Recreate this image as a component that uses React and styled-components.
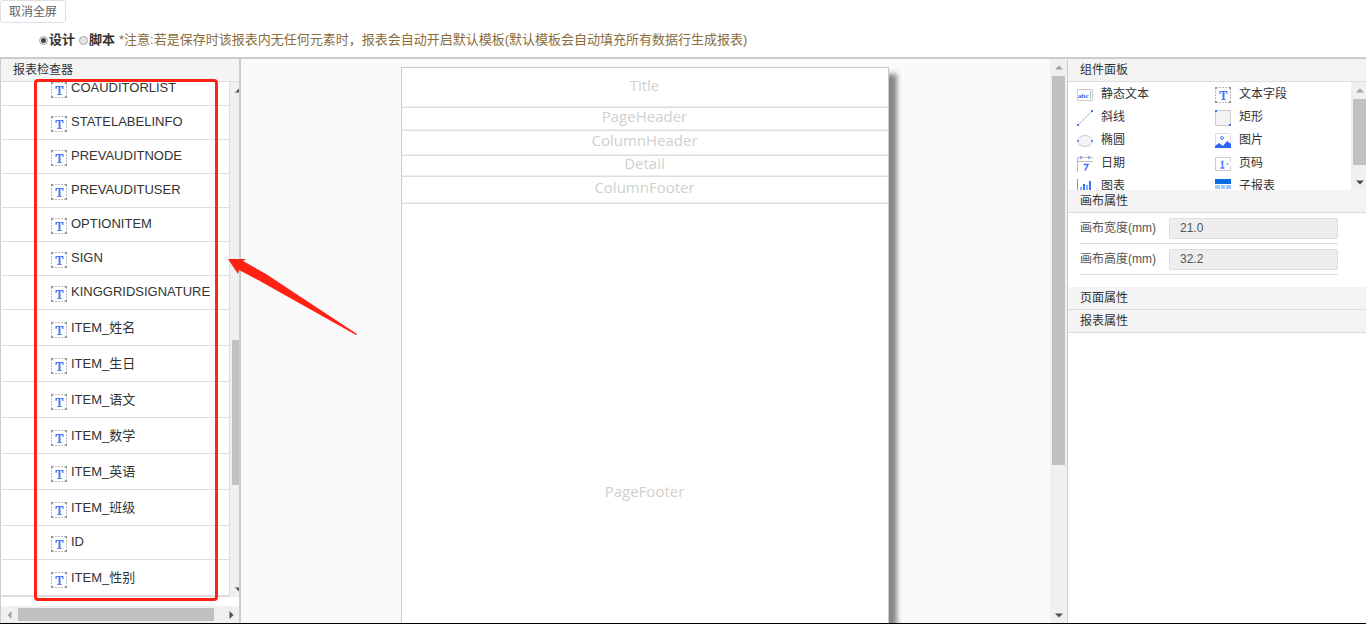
import React, { useState } from 'react';
import styled, { createGlobalStyle, css } from 'styled-components';

const GlobalStyle = createGlobalStyle`
  * {
    box-sizing: border-box;
  }

  body {
    margin: 0;
    background: #fff;
    color: #333;
    font-family: 'Liberation Sans', 'Noto Sans CJK SC', sans-serif;
    font-size: 12px;
  }

  button, input {
    font-family: inherit;
  }
`;

const Page = styled.div`
  display: flex;
  flex-direction: column;
  height: 100vh;
  overflow: hidden;
  border-bottom: 1px solid #000;
`;

const FullscreenButton = styled.button`
  align-self: flex-start;
  height: 23px;
  padding: 0 8px;
  border: 1px solid #dcdfe6;
  border-radius: 3px;
  background: #fff;
  color: #606266;
  font-size: 12px;
  line-height: 20px;
  white-space: nowrap;
  cursor: pointer;
`;

const ModeBar = styled.form`
  display: flex;
  align-items: center;
  height: 34px;
  padding-left: 39px;
  font-size: 13px;
  line-height: 20px;
  white-space: nowrap;
`;

const ModeLabel = styled.label`
  display: flex;
  align-items: center;
  margin-right: 4px;
  font-weight: bold;
`;

const Radio = styled.input`
  appearance: none;
  width: 9px;
  height: 9px;
  margin: 0 1px 0 0;
  border: 1px solid #a6a6a6;
  border-radius: 50%;
  background: #e6e6e6;

  &:checked {
    background: radial-gradient(circle, #444 0 2px, #e6e6e6 3px);
  }
`;

const Notice = styled.span`
  color: #8a6d3b;
`;

const Workspace = styled.main`
  display: flex;
  flex: 1;
  min-height: 0;
  border-top: 2px solid #ccc;
`;

const PanelTitle = styled.h2`
  flex: none;
  height: 23px;
  margin: 0;
  padding-left: 12px;
  border-bottom: 1px solid #ddd;
  background: #f4f4f4;
  font-size: 12px;
  font-weight: normal;
  line-height: 22px;
`;

const Inspector = styled.aside`
  position: relative;
  display: flex;
  flex: none;
  flex-direction: column;
  width: 241px;
  border: solid #ccc;
  border-width: 0 2px 0 1px;
`;

const FieldArea = styled.div`
  display: flex;
  flex: 1;
  min-height: 0;
  margin-bottom: 9px;
`;

const FieldList = styled.ul`
  display: flex;
  flex: 1;
  flex-direction: column;
  justify-content: flex-end;
  margin: 0;
  padding: 0 0 0 1px;
  overflow: hidden;
  border-right: 1px solid #ddd;
  border-bottom: 1px solid #ddd;
  list-style: none;
`;

const FieldRow = styled.li`
  display: flex;
  flex: none;
  align-items: center;
  gap: 4px;
  height: ${({ $tall }) => ($tall ? 36 : 34)}px;
  padding: 0 0 ${({ $tall }) => ($tall ? 0 : 1)}px 49px;
  border-bottom: 1px solid #ddd;
  font-size: 13px;
  line-height: 20px;
  white-space: nowrap;

  svg {
    flex: none;
    margin-top: 4px;
  }
`;

const Track = styled.div`
  display: flex;
  flex: none;
  background: #f0f0f0;
  overflow: hidden;
  ${({ $horizontal, $size }) =>
    $horizontal
      ? css`
          height: ${$size}px;
        `
      : css`
          flex-direction: column;
          width: ${$size}px;
        `}
`;

const TrackButton = styled.button`
  display: flex;
  flex: none;
  align-items: center;
  justify-content: center;
  width: 17px;
  height: 17px;
  padding: 0;
  border: 0;
  background: none;
  color: ${({ $dim }) => ($dim ? '#a3a3a3' : '#505050')};
`;

const Rail = styled.div`
  display: flex;
  flex: 1;
  ${({ $horizontal }) =>
    $horizontal
      ? css`
          padding: 2px 0;
        `
      : css`
          flex-direction: column;
          width: 17px;
          padding: 0 2px;
        `}
`;

const Gap = styled.div`
  flex: ${({ $grow }) => $grow} 1 0;
`;

const Thumb = styled(Gap)`
  background: #c1c1c1;
`;

const Stage = styled.section`
  display: flex;
  flex: 1;
  justify-content: center;
  min-width: 0;
  padding: 8px 2px 0 0;
  background: #fafafa;
  overflow: hidden;
`;

const Paper = styled.div`
  flex: none;
  width: 488px;
  height: 720px;
  border: 1px solid #ccc;
  background: #fff;
  box-shadow: 8px 7px 5px #888;
`;

const Band = styled.div`
  display: flex;
  align-items: center;
  justify-content: center;
  height: ${({ $height }) => $height}px;
  padding-bottom: 6px;
  border-bottom: 1px solid #ddd;
  box-shadow: inset 0 -1px #eee;
  color: #d0d0d0;
  font-family: 'Open Sans', sans-serif;
  font-size: 15px;
  font-weight: 500;
  line-height: 20px;
`;

const Properties = styled.aside`
  display: flex;
  flex: none;
  flex-direction: column;
  width: 299px;
  border-left: 1px solid #ccc;
`;

const PaletteArea = styled.div`
  display: flex;
  height: 108px;
  overflow: hidden;
`;

const Palette = styled.div`
  display: grid;
  flex: 1;
  grid-template-columns: 138px 1fr;
  grid-auto-rows: 23px;
  align-content: start;
  padding-left: 9px;
`;

const Tool = styled.button`
  display: flex;
  align-items: center;
  gap: 8px;
  padding: 1px 0 0;
  border: 0;
  background: none;
  color: #333;
  font-size: 12px;
  line-height: 20px;

  svg {
    flex: none;
    margin-top: 2px;
  }
`;

const Fields = styled.div`
  display: flex;
  flex-direction: column;
  padding: 0 28px 12px 12px;
`;

const Field = styled.label`
  display: flex;
  align-items: center;
  height: 31px;
  border-bottom: 1px solid #ddd;
  color: #555;
  line-height: 20px;
`;

const FieldName = styled.span`
  width: 89px;
  white-space: nowrap;
`;

const FieldInput = styled.input`
  flex: 1;
  min-width: 0;
  height: 21px;
  padding: 0 10px;
  border: 1px solid #ddd;
  border-radius: 2px;
  background: #eee;
  color: #555;
  font-size: 12px;
`;

const Highlight = styled.div`
  position: absolute;
  z-index: 1;
  top: 20px;
  bottom: 22px;
  left: 33px;
  width: 184px;
  border: 3px solid #ff2214;
  border-radius: 4px;
  pointer-events: none;
`;

const Pointer = styled.svg`
  position: absolute;
  z-index: 1;
  top: 199px;
  left: 226px;
  pointer-events: none;
`;

const fields = [
  'COAUDITORLIST',
  'STATELABELINFO',
  'PREVAUDITNODE',
  'PREVAUDITUSER',
  'OPTIONITEM',
  'SIGN',
  'KINGGRIDSIGNATURE',
  'ITEM_姓名',
  'ITEM_生日',
  'ITEM_语文',
  'ITEM_数学',
  'ITEM_英语',
  'ITEM_班级',
  'ID',
  'ITEM_性别',
];

const bands = [
  { name: 'Title', height: 40 },
  { name: 'PageHeader', height: 23 },
  { name: 'ColumnHeader', height: 25 },
  { name: 'Detail', height: 21 },
  { name: 'ColumnFooter', height: 27 },
  { name: 'PageFooter', height: 580 },
];

const Icon = ({ children }) => (
  <svg width="16" height="16" viewBox="0 0 16 16" aria-hidden="true">
    {children}
  </svg>
);

const TextFieldIcon = () => (
  <Icon>
    <path d="M1 .5h14M1 15.5h14M.5 1v14M15.5 1v14" fill="none" stroke="#bbb" strokeDasharray="2 1" />
    <path d="M0 0h2v2H0zM14 0h2v2h-2zM0 14h2v2H0zM14 14h2v2h-2z" fill="#999" />
    <path d="M4.500 4h8v3h-1l-.5-2H9.500v7.200H11v.8H6v-.8h1.500V5H6l-.5 2h-1z" fill="#4a78f5" />
  </Icon>
);

const tools = [
  {
    name: '静态文本',
    icon: (
      <Icon>
        <path d="M.5 2.5h15v11H.5z" fill="#fff" stroke="#ccc" />
        <text x="1" y="11" fill="#2f66f0" fontSize="7" fontWeight="bold" fontFamily="Liberation Serif">abc</text>
        <path d="M13.5 4v8" stroke="#bbb" />
      </Icon>
    ),
  },
  { name: '文本字段', icon: <TextFieldIcon /> },
  {
    name: '斜线',
    icon: (
      <Icon>
        <path d="M1 15L15 1" stroke="#bbb" />
        <path d="M0 14h2v2H0zM14 0h2v2h-2z" fill="#3970ff" />
      </Icon>
    ),
  },
  {
    name: '矩形',
    icon: (
      <Icon>
        <path d="M.5.5h15v15H.5z" fill="#f3f3f3" stroke="#ccc" />
        <path d="M0 0h2v2H0zM14 14h2v2h-2z" fill="#3970ff" />
      </Icon>
    ),
  },
  {
    name: '椭圆',
    icon: (
      <Icon>
        <ellipse cx="8" cy="8" rx="7.5" ry="5.5" fill="#f3f3f3" stroke="#ccc" />
        <path d="M0 7h2v2H0zM14 7h2v2h-2z" fill="#6c96ff" />
      </Icon>
    ),
  },
  {
    name: '图片',
    icon: (
      <Icon>
        <path d="M.5 15V.5h15V15" fill="#fff" stroke="#ddd" />
        <circle cx="7" cy="5" r="1.5" fill="#dce7ff" stroke="#5587ff" />
        <path d="M0 13l4-3 4 3 4-5 4 3v4H0z" fill="#2b66fb" />
      </Icon>
    ),
  },
  {
    name: '日期',
    icon: (
      <Icon>
        <path d="M.5 16V1.5H16M1 5.5h15" fill="none" stroke="#bbb" />
        <path d="M4 0v3M12 0v3" stroke="#8aaaff" strokeWidth="2" />
        <path d="M6.500 8.500h4.500l-3 6" fill="none" stroke="#4173f4" strokeWidth="1.5" />
      </Icon>
    ),
  },
  {
    name: '页码',
    icon: (
      <Icon>
        <path d="M15.5 6V1.500H.5v13h15V10" fill="none" stroke="#ccc" />
        <path d="M6 6.500l1.500-1V12M5.500 12h4" fill="none" stroke="#4d7dfa" strokeWidth="1.5" />
        <path d="M11 8h3" stroke="#ccc" strokeWidth="2" />
      </Icon>
    ),
  },
  {
    name: '图表',
    icon: (
      <Icon>
        <path d="M.5 0v15.5H16" fill="none" stroke="#999" />
        <path d="M4 8v7M10 6v9" stroke="#8aacff" strokeWidth="2" />
        <path d="M7 5v10M13 2v13" stroke="#3970ff" strokeWidth="2" />
      </Icon>
    ),
  },
  {
    name: '子报表',
    icon: (
      <Icon>
        <path d="M0 0h16v5H0z" fill="#0c6be0" />
        <path d="M0 6h5v4H0zM6 6h4v4H6zM11 6h5v4h-5zM0 11h5v4H0zM6 11h4v4H6zM11 11h5v4h-5z" fill="#a3c4f8" />
      </Icon>
    ),
  },
];

const arrows = {
  up: 'M0 5.5h8L4 1.5z',
  down: 'M0 2.5h8L4 6.5z',
  left: 'M5.5 0v8L1.5 4z',
  right: 'M2.5 0v8L6.5 4z',
};

const ScrollArrow = ({ direction, dim }) => (
  <TrackButton type="button" $dim={dim} aria-label={`Scroll ${direction}`}>
    <svg width="8" height="8" viewBox="0 0 8 8">
      <path d={arrows[direction]} fill="currentColor" />
    </svg>
  </TrackButton>
);

const Scrollbar = ({ horizontal, size = 17, parts, dimStart }) => (
  <Track $horizontal={horizontal} $size={size}>
    <ScrollArrow direction={horizontal ? 'left' : 'up'} dim={dimStart} />
    <Rail $horizontal={horizontal}>
      <Gap $grow={parts[0]} />
      <Thumb $grow={parts[1]} />
      <Gap $grow={parts[2]} />
    </Rail>
    <ScrollArrow direction={horizontal ? 'right' : 'down'} />
  </Track>
);

const App = () => {
  const [mode, setMode] = useState('design');
  const [size, setSize] = useState({ width: '21.0', height: '32.2' });

  const handleMode = event => setMode(event.target.value);

  const handleSize = event => {
    setSize({ ...size, [event.target.name]: event.target.value });
  };

  return (
    <Page>
      <GlobalStyle />
      <FullscreenButton type="button">取消全屏</FullscreenButton>
      <ModeBar>
        <ModeLabel>
          <Radio type="radio" name="mode" value="design" checked={mode === 'design'} onChange={handleMode} />
          设计
        </ModeLabel>
        <ModeLabel>
          <Radio type="radio" name="mode" value="script" checked={mode === 'script'} onChange={handleMode} />
          脚本
        </ModeLabel>
        <Notice>
          *注意:若是保存时该报表内无任何元素时，报表会自动开启默认模板(默认模板会自动填充所有数据行生成报表)
        </Notice>
      </ModeBar>

      <Workspace>
        <Inspector>
          <PanelTitle>报表检查器</PanelTitle>
          <FieldArea>
            <FieldList>
              {fields.map(name => (
                <FieldRow key={name} $tall={/[^\w]/.test(name)}>
                  <TextFieldIcon />
                  {name}
                </FieldRow>
              ))}
            </FieldList>
            <Scrollbar size={9} parts={[241, 145, 95]} />
          </FieldArea>
          <Scrollbar horizontal parts={[0, 198, 8]} dimStart />
          <Highlight />
          <Pointer width="132" height="80" viewBox="0 0 132 80" aria-hidden="true">
            <path d="M1 1l18 0-3 2 23 13 91 60-1 1L31 22 12 12l-1 4z" fill="#ff2214" />
          </Pointer>
        </Inspector>

        <Stage>
          <Paper>
            {bands.map(({ name, height }) => (
              <Band key={name} $height={height}>{name}</Band>
            ))}
          </Paper>
        </Stage>
        <Scrollbar parts={[0, 390, 142]} dimStart />

        <Properties>
          <PanelTitle>组件面板</PanelTitle>
          <PaletteArea>
            <Palette>
              {tools.map(({ name, icon }) => (
                <Tool key={name} type="button">
                  {icon}
                  {name}
                </Tool>
              ))}
            </Palette>
            <Scrollbar size={15} parts={[0, 66, 8]} dimStart />
          </PaletteArea>
          <PanelTitle>画布属性</PanelTitle>
          <Fields>
            <Field>
              <FieldName>画布宽度(mm)</FieldName>
              <FieldInput name="width" value={size.width} onChange={handleSize} />
            </Field>
            <Field>
              <FieldName>画布高度(mm)</FieldName>
              <FieldInput name="height" value={size.height} onChange={handleSize} />
            </Field>
          </Fields>
          <PanelTitle>页面属性</PanelTitle>
          <PanelTitle>报表属性</PanelTitle>
        </Properties>
      </Workspace>
    </Page>
  );
};

export default App;
